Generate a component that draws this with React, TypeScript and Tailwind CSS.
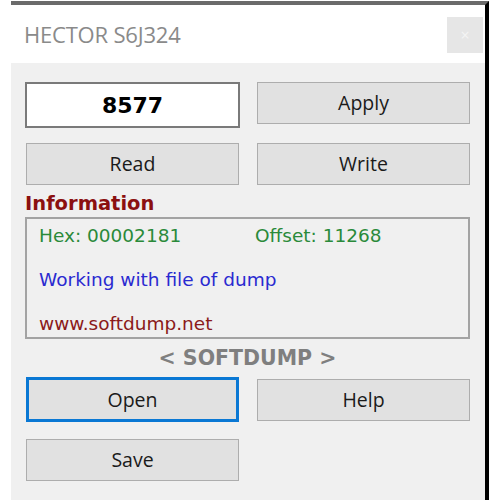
import React from 'react';

const base =
  "w-[213px] bg-[#e1e1e1] text-[19.5px] text-[#1a1a1a] flex items-center justify-center";
const btn = base + " h-[42px] border border-[#adadad]";
const focused = base + " h-[45px] border-[3px] border-[#0a78d4]";

const App = () => {
  return (
    <div className="w-[500px] h-[500px] bg-white overflow-hidden" style={{ fontFamily: '"Open Sans", "Noto Sans", sans-serif' }}>
      <div className="ml-[11px] mt-[1px] w-[478px] h-[499px] flex flex-col border-t-4 border-t-[#6b6b6b] border-r-4 border-r-black">
        {/* title bar */}
        <div className="h-[58px] bg-white flex items-center justify-between pl-[13px] pr-[2px]">
          <span className="text-[22px] text-[#8a8a8a] tracking-[-0.2px]">HECTOR S6J324</span>
          <div className="w-[36px] h-[36px] bg-[#e6e6e6] flex items-center justify-center text-[#f4f4f4] text-[16px] mt-[1px]">×</div>
        </div>
        {/* body */}
        <div className="flex-1 bg-[#f0f0f0] pl-[14px] pt-[19px]">
          <div className="flex gap-[17px] items-start">
            <div className="w-[215px] h-[46px] bg-white border-2 border-[#7a7a7a] flex items-center justify-center text-[22px] font-bold text-black" style={{ fontFamily: '"DejaVu Sans", sans-serif' }}>
              8577
            </div>
            <div className={btn}>Apply</div>
          </div>
          <div className="flex gap-[18px] mt-[15px] ml-[1px]">
            <div className={btn}>Read</div>
            <div className={btn}>Write</div>
          </div>
          <div className="mt-[6px] text-[19.5px] font-bold text-[#8b1010] leading-[26px]" style={{ fontFamily: '"DejaVu Sans", sans-serif' }}>
            Information
          </div>
          <div className="w-[445px] h-[122px] border-2 border-[#a3a3a3] pl-[12px] pt-[6px] text-[18.5px] leading-[22px]" style={{ fontFamily: '"DejaVu Sans", sans-serif' }}>
            <div className="flex text-[#2a8a3a]">
              <span className="w-[216px]">Hex: 00002181</span>
              <span>Offset: 11268</span>
            </div>
            <div className="mt-[22px] text-[#2a2ad0]">Working with file of dump</div>
            <div className="mt-[22px] text-[#8b1a1a]">www.softdump.net</div>
          </div>
          <div className="w-[445px] text-center mt-[7px] text-[20.5px] font-bold text-[#7f7f7f] leading-[24px]" style={{ fontFamily: '"DejaVu Sans", sans-serif' }}>
            &lt; SOFTDUMP &gt;
          </div>
          <div className="flex gap-[18px] mt-[7px] ml-[1px] items-center">
            <div className={focused}>Open</div>
            <div className={btn}>Help</div>
          </div>
          <div className="mt-[17px] ml-[1px]">
            <div className={btn}>Save</div>
          </div>
        </div>
      </div>
    </div>
  );
};

export default App;
